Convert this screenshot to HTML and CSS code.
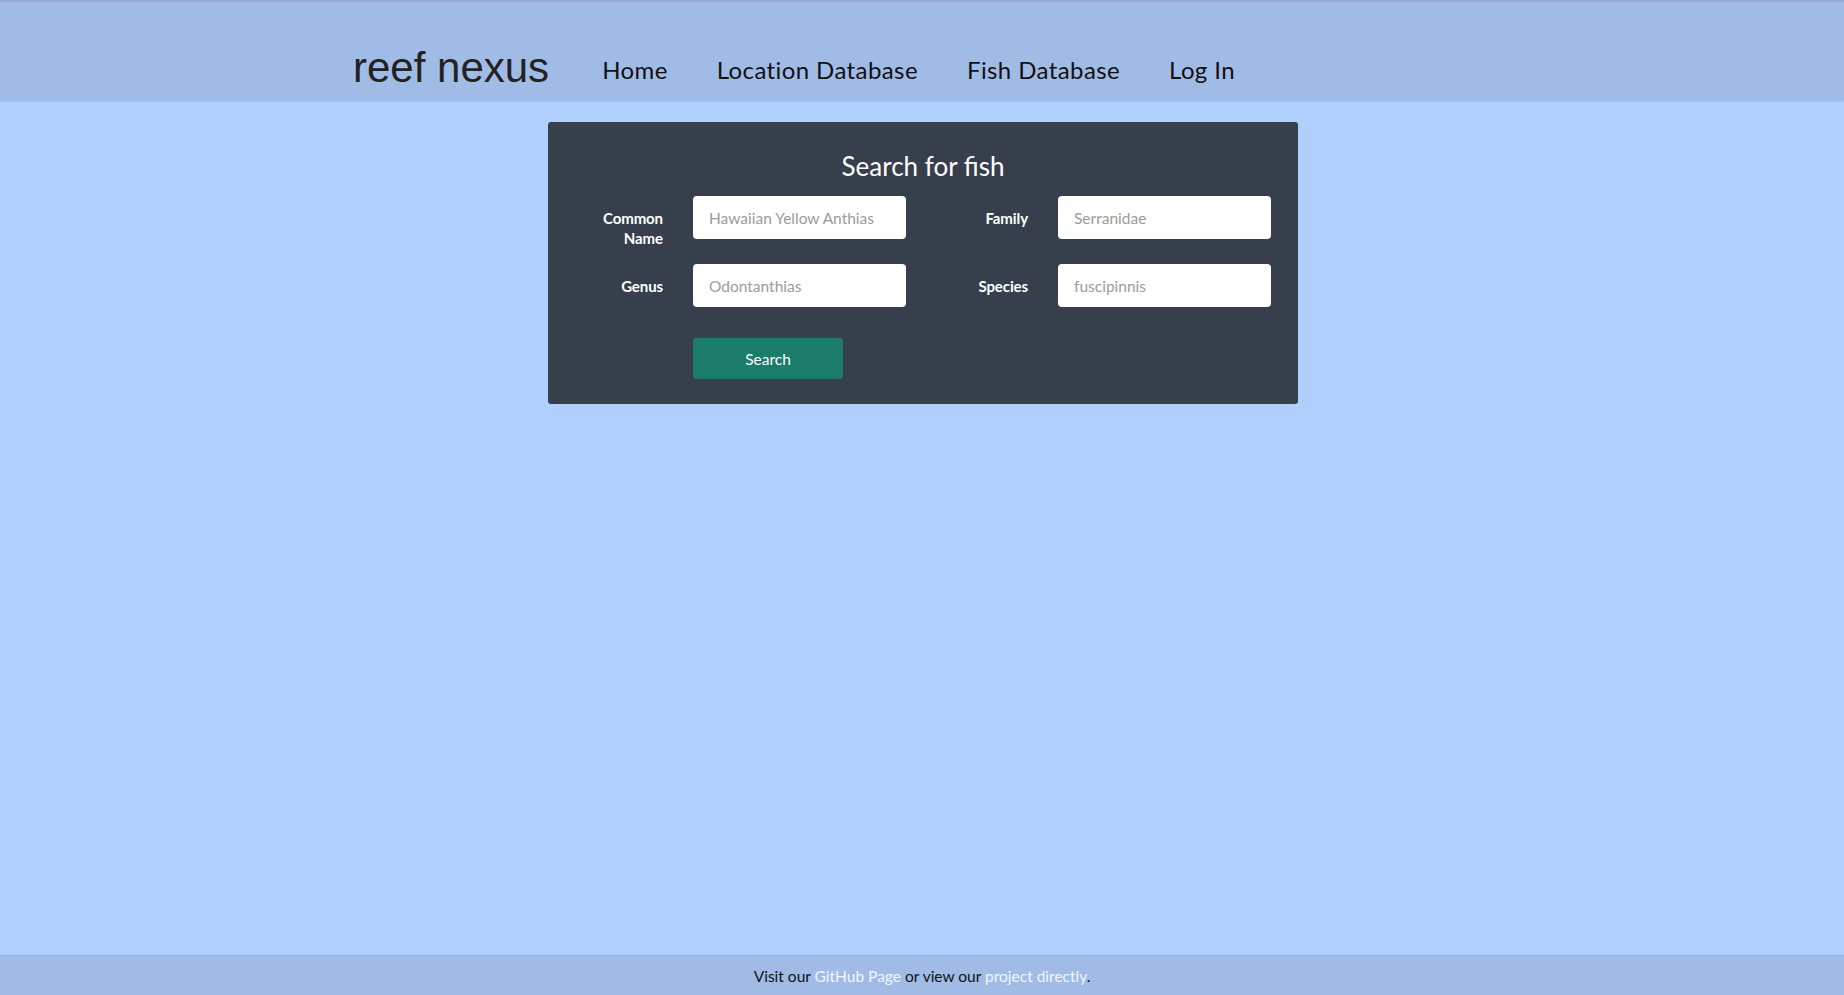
FILE: index.html
```html
<!DOCTYPE html>
<html lang="en">
<head>
<meta charset="utf-8">
<title>reef nexus</title>
<link rel="stylesheet" href="styles.css">
</head>
<body>
<header class="topbar">
  <a class="brand" href="#">reef nexus</a>
  <nav class="nav">
    <a class="nav-link" href="#">Home</a>
    <a class="nav-link" href="#">Location Database</a>
    <a class="nav-link" href="#">Fish Database</a>
    <a class="nav-link" href="#">Log In</a>
  </nav>
</header>
<main class="main">
  <section class="card">
    <h1 class="card-title">Search for fish</h1>
    <form class="search-grid">
      <label class="field-label" for="common">Common<br>Name</label>
      <input class="field-input" id="common" type="text" placeholder="Hawaiian Yellow Anthias">
      <label class="field-label" for="family">Family</label>
      <input class="field-input" id="family" type="text" placeholder="Serranidae">
      <label class="field-label" for="genus">Genus</label>
      <input class="field-input" id="genus" type="text" placeholder="Odontanthias">
      <label class="field-label" for="species">Species</label>
      <input class="field-input" id="species" type="text" placeholder="fuscipinnis">
      <button class="search-btn" type="button">Search</button>
    </form>
  </section>
</main>
<footer class="footer">
  <p class="footer-text">Visit our <a class="footer-link" href="#">GitHub Page</a> or view our <a class="footer-link" href="#">project directly</a>.</p>
</footer>
</body>
</html>
```
FILE: styles.css
```css
* { box-sizing: border-box; }
html, body { height: 100%; }
body {
  margin: 0;
  min-height: 100vh;
  display: flex;
  flex-direction: column;
  background: #b1cffc;
  font-family: Lato, "Open Sans", sans-serif;
  color: #111;
}
.topbar {
  height: 100px;
  background: #a0bbe6;
  border-top: 2px solid #97a9cd;
  box-shadow: 0 1px 2px rgba(60, 80, 120, 0.25);
  display: flex;
  align-items: flex-end;
  padding: 0 0 11px 353px;
  position: relative;
  z-index: 1;
}
.brand {
  font-family: "Liberation Sans", Arial, sans-serif;
  font-size: 42px;
  line-height: 42px;
  color: #222;
  text-decoration: none;
  margin-right: 53px;
}
.nav {
  display: flex;
  gap: 49px;
  padding-bottom: 7px;
}
.nav-link {
  font-family: Lato, sans-serif;
  font-size: 24px;
  line-height: 24px;
  letter-spacing: 0.4px;
  color: #111;
  text-decoration: none;
}
.main {
  flex: 1;
  display: flex;
  justify-content: center;
  align-items: flex-start;
  padding: 22px 0 0 2px;
}
.card {
  width: 750px;
  background: #363f4b;
  border-radius: 3px;
  padding: 29px 26px 25px 26px;
}
.card-title {
  margin: 0 0 14px 0;
  text-align: center;
  font-family: Lato, sans-serif;
  font-weight: 400;
  font-size: 26px;
  line-height: 1.2;
  color: #fff;
}
.search-grid {
  display: grid;
  grid-template-columns: 89px 213px 92px 213px;
  grid-template-rows: 43px 43px auto;
  column-gap: 30px;
  row-gap: 25px;
  margin: 0;
}
.field-label {
  text-align: right;
  color: #fff;
  font-weight: 700;
  font-size: 15px;
  line-height: 20px;
  letter-spacing: -0.1px;
  padding-top: 12px;
  white-space: nowrap;
}
.field-input {
  height: 43px;
  border: none;
  border-radius: 4px;
  background: #fff;
  padding: 0 16px;
  font-family: Lato, sans-serif;
  font-size: 15.5px;
  color: #333;
  outline: none;
}
.field-input::placeholder { color: #9b9b9b; }
.search-btn {
  grid-column: 2;
  width: 150px;
  height: 41px;
  margin-top: 6px;
  border: none;
  border-radius: 3px;
  background: #1b7c69;
  color: #fff;
  font-family: Lato, sans-serif;
  font-size: 15.5px;
}
.footer {
  height: 40px;
  background: #a0bbe6;
  border-top: 1px solid #97b0d8;
  display: flex;
  align-items: center;
  justify-content: center;
}
.footer-text {
  margin: 0;
  font-size: 15.5px;
  color: #111;
}
.footer-link {
  color: #f2f6ff;
  text-decoration: none;
}
```
